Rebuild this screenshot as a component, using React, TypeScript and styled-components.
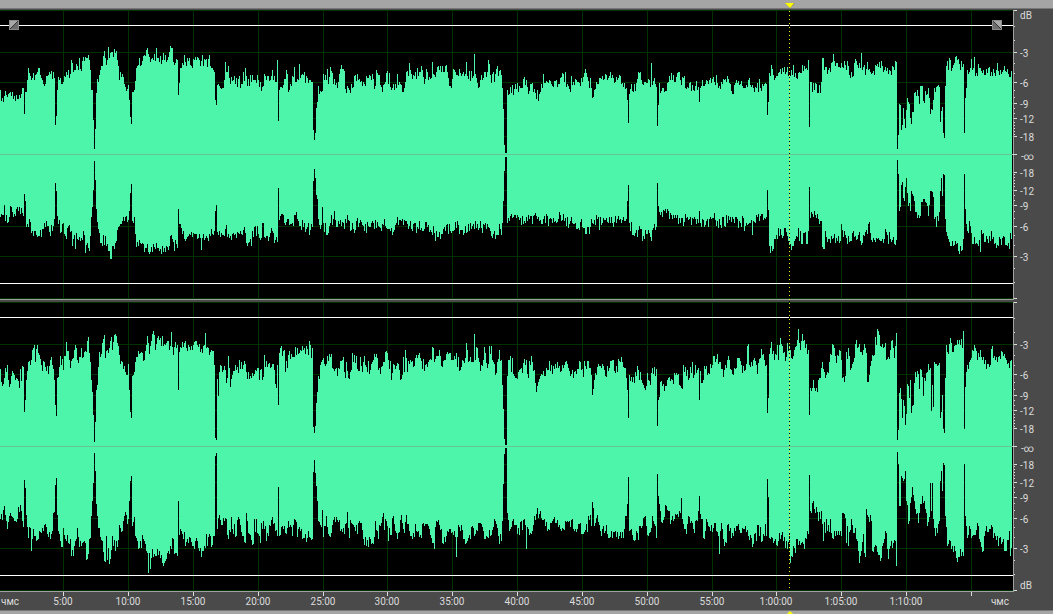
import React from 'react';
import styled, { createGlobalStyle } from 'styled-components';

const GlobalStyle = createGlobalStyle`
  * { box-sizing: border-box; }
  body { margin: 0; background: #a5a5a5; font-family: Roboto, "Liberation Sans", sans-serif; }
`;

/* Envelope breakpoints, "column,row" pairs, for each side of each channel. */
const LEFT_UPPER = `0,90 1,101 4,96 7,97 10,92 14,96 20,98 22,88 23,88 24,114 25,92 27,80 28,68 30,76 34,80 38,68 41,78 45,84 50,74 54,78 55,125 56,116 57,90 60,78 63,82 66,72 70,74 71,60 73,72 76,64 80,69 84,61 88,55 90,70 92,90 93,120 94,149 95,129 96,93 98,82 101,66 104,51 105,58 107,60 111,52 113,57 114,49 117,60 119,80 122,74 125,87 128,85 129,100 130,117 131,124 132,92 134,90 136,68 139,58 141,65 145,56 147,48 150,62 154,54 158,58 162,60 168,57 171,48 173,62 177,60 178,95 179,83 181,68 184,55 190,65 194,60 200,66 205,60 210,66 213,70 214,72 215,100 216,105 217,85 220,88 224,80 225,62 227,72 230,84 236,78 242,84 245,68 247,86 252,75 256,83 263,86 264,74 270,80 276,82 277,60 278,121 279,90 283,85 286,70 288,92 290,84 292,76 296,82 298,80 299,64 300,78 303,75 308,83 311,82 312,82 313,130 314,140 315,133 316,108 317,102 318,86 322,91 323,74 326,80 327,69 328,84 330,67 333,84 338,82 340,69 343,69 345,89 350,93 352,88 354,76 360,82 364,84 366,76 370,76 372,74 375,86 376,70 380,85 382,92 385,82 387,71 390,87 394,90 397,74 402,92 406,72 410,70 412,79 414,76 420,72 422,70 424,84 426,69 428,80 431,78 432,62 433,74 436,72 438,66 441,72 445,66 448,78 451,88 453,69 456,75 461,76 465,74 466,62 467,76 473,76 474,54 475,74 478,88 480,80 484,72 487,72 488,60 490,75 494,82 497,66 498,76 500,70 502,88 503,109 504,145 505,153 506,153 507,90 511,93 515,84 518,92 522,88 526,80 528,94 532,83 536,99 540,92 543,74 545,83 549,80 553,87 558,84 561,77 564,82 565,72 570,92 571,76 574,85 578,82 582,82 587,77 589,88 590,78 592,98 594,90 596,82 600,78 603,80 606,75 609,76 610,72 613,78 618,78 622,83 626,88 627,100 628,123 629,94 631,84 633,92 636,83 638,72 640,72 642,84 645,82 648,79 650,87 651,63 652,85 654,78 656,87 657,126 658,105 659,83 660,93 664,92 668,82 671,73 675,82 678,72 679,72 681,85 684,76 688,88 692,85 698,87 699,102 700,88 705,84 710,78 714,82 718,88 724,80 727,76 730,84 732,94 736,80 740,84 744,88 748,80 752,85 756,88 760,88 766,84 767,115 768,102 769,73 771,65 774,80 778,73 782,68 786,72 790,76 793,65 796,78 800,73 804,66 807,70 808,60 809,127 810,82 812,92 816,84 820,93 821,82 822,58 824,70 828,70 832,62 835,66 840,68 845,65 848,66 852,77 854,63 858,68 860,68 861,53 862,70 868,70 872,73 876,66 882,66 888,74 894,70 896,62 897,149 898,135 899,104 900,105 901,130 903,108 905,128 907,98 909,104 911,124 914,93 917,90 919,104 920,86 924,103 928,88 930,114 932,110 934,88 937,86 939,87 940,122 942,107 943,133 944,138 945,86 946,66 948,70 950,60 952,68 955,57 957,60 960,70 963,64 964,133 965,98 967,70 970,68 973,68 974,57 975,76 978,64 982,73 988,68 990,76 996,70 1002,72 1004,66 1008,74 1012,72`;
const LEFT_LOWER = `0,216 4,204 7,222 10,205 14,213 19,206 22,212 23,215 24,193 25,200 26,226 30,221 33,235 38,235 42,228 46,220 50,235 54,218 55,182 56,190 57,215 60,232 63,222 66,238 69,224 72,245 76,232 80,240 84,234 88,247 89,250 90,235 91,216 92,206 93,189 94,160 95,179 96,208 98,228 102,245 105,235 109,250 111,258 112,245 114,248 116,240 119,225 123,216 127,221 128,219 129,210 130,192 131,183 132,220 134,216 135,233 138,245 143,243 148,251 153,243 160,248 166,245 172,238 177,247 178,208 179,223 182,233 186,238 192,236 200,237 201,249 202,237 210,235 214,230 215,210 216,204 217,231 220,236 225,228 230,235 236,237 240,230 245,232 247,245 250,238 251,245 255,225 259,237 263,222 264,236 268,240 272,230 277,241 278,187 279,219 281,213 284,222 288,218 293,225 295,214 300,225 304,222 305,231 308,222 312,226 313,180 314,168 315,177 316,194 318,218 321,224 322,206 323,222 327,234 330,222 334,210 336,226 340,219 344,228 347,214 350,230 356,220 362,224 366,232 372,220 380,227 384,218 390,230 396,222 402,218 408,228 414,222 420,229 428,224 434,232 441,233 446,224 452,230 458,224 464,232 470,222 478,229 485,222 490,230 497,234 502,222 503,200 504,170 505,156 506,156 507,222 515,214 525,222 535,212 545,222 560,214 575,222 590,226 598,216 610,222 620,218 626,218 627,200 628,184 629,222 632,234 640,228 650,236 656,226 657,182 658,205 660,214 670,212 680,222 690,216 698,222 699,210 700,222 710,216 720,224 730,216 740,222 751,219 752,234 753,220 760,215 766,216 767,189 768,209 769,245 772,250 775,238 778,227 782,237 785,227 788,240 793,245 796,235 798,227 801,243 804,232 807,243 808,230 809,186 810,217 814,210 818,218 821,220 822,246 824,248 825,230 828,238 834,233 840,240 841,223 845,234 850,240 853,230 858,234 861,244 864,235 868,223 870,232 875,241 880,240 884,238 885,228 890,238 896,239 897,159 898,173 899,210 900,206 901,184 902,181 904,200 906,177 908,205 910,210 911,190 913,195 915,211 920,215 921,201 924,198 928,215 930,190 932,191 934,218 938,220 940,190 941,177 942,195 943,173 944,174 945,218 947,235 951,245 955,240 960,245 962,249 963,238 964,173 965,208 967,230 969,220 971,232 978,245 982,233 990,240 991,230 998,245 1003,235 1006,244 1012,231`;
const RIGHT_UPPER = `0,369 1,382 4,378 7,365 8,380 10,384 13,373 16,378 19,388 22,366 23,367 24,412 25,400 26,380 28,362 31,360 33,348 35,362 37,345 39,355 42,371 44,362 48,374 50,360 52,365 54,380 55,405 56,416 57,378 60,356 63,370 66,342 68,351 70,368 74,350 75,345 77,360 79,357 82,358 86,352 88,337 90,362 91,380 92,392 93,415 94,442 95,422 96,390 98,367 101,354 104,335 105,358 107,350 109,348 111,337 112,350 114,335 117,343 120,364 122,362 126,375 128,364 129,390 130,412 131,418 132,376 134,372 136,357 139,354 144,360 147,336 149,354 151,341 154,335 155,350 158,336 161,346 165,345 170,346 171,332 173,355 175,342 177,345 178,390 179,352 181,348 188,345 192,350 195,341 200,352 204,345 205,333 206,348 210,352 213,351 214,365 215,438 216,440 217,379 218,396 219,372 220,365 225,370 226,383 228,356 230,387 232,375 235,365 238,373 241,362 246,372 250,376 255,370 258,368 262,380 266,361 270,368 274,370 276,388 277,365 278,405 279,353 284,350 285,372 288,355 292,357 296,355 300,350 304,348 308,355 309,341 311,358 312,348 313,427 314,433 315,426 316,403 317,392 318,376 322,360 325,366 329,354 332,368 337,376 341,361 343,357 345,378 346,362 348,378 351,370 354,355 358,371 364,356 369,374 372,362 376,354 380,374 384,362 387,353 391,380 394,365 399,370 401,379 403,357 404,372 405,350 407,372 410,360 414,366 416,355 420,358 424,371 428,362 431,360 432,347 434,362 439,350 441,366 444,360 448,354 452,360 456,353 459,371 462,360 465,358 466,343 468,362 473,362 474,334 475,360 477,348 480,371 483,360 484,347 487,368 489,346 492,360 496,373 499,350 501,360 502,385 503,409 504,439 505,445 506,445 507,376 508,360 510,356 514,376 518,372 522,373 526,360 528,378 531,356 534,370 536,392 538,382 544,376 548,370 549,361 552,374 557,362 561,371 566,361 570,376 575,371 579,361 583,377 587,361 590,368 591,375 592,395 594,380 597,367 602,364 605,376 610,361 613,360 615,373 618,359 622,362 625,368 626,378 627,390 628,418 629,375 632,382 635,372 638,370 641,380 644,388 648,380 650,385 652,368 655,376 656,369 657,426 658,400 660,382 664,391 668,378 672,380 678,374 681,388 685,367 688,380 690,367 694,375 698,368 699,400 700,371 702,383 704,366 708,373 710,364 716,359 720,362 723,377 727,360 732,374 738,358 742,373 746,364 747,346 749,365 753,360 757,374 760,358 763,354 766,365 767,413 768,398 769,354 771,342 774,360 777,345 778,360 780,338 783,353 785,361 787,343 790,350 793,356 796,346 798,329 800,350 802,334 805,348 808,350 809,415 810,388 812,388 813,380 815,391 818,380 820,378 822,362 824,372 825,378 829,362 833,345 836,363 840,351 842,378 845,376 848,348 850,370 854,358 856,340 860,352 862,355 865,348 867,382 869,375 872,355 874,355 875,337 876,345 878,331 880,346 885,343 886,360 890,350 892,340 894,358 896,333 897,440 898,430 899,393 900,388 902,418 903,400 905,425 907,384 909,398 910,380 911,413 913,405 914,383 917,371 919,389 921,370 923,396 926,373 930,368 931,411 932,385 933,407 935,364 938,365 939,363 940,418 941,412 942,395 943,429 944,433 945,378 946,345 948,354 950,338 953,352 956,345 959,340 962,348 963,331 964,429 965,387 967,365 970,360 972,350 975,348 977,360 980,350 984,364 990,365 991,349 995,360 998,357 1002,352 1006,360 1009,368 1012,360`;
const RIGHT_LOWER = `0,518 4,505 7,528 10,512 14,520 17,518 20,504 22,520 23,526 24,479 25,487 26,514 28,537 30,527 31,550 33,528 36,540 40,531 46,526 50,538 53,512 54,511 55,484 56,477 57,514 60,540 62,546 63,527 66,540 70,538 71,555 75,540 77,527 79,546 84,540 87,558 89,538 91,515 92,500 93,482 94,452 95,470 96,503 98,527 102,540 104,560 106,535 109,563 112,535 115,550 119,524 122,530 125,511 127,523 128,518 129,500 130,480 131,475 132,525 134,516 135,535 138,548 143,538 146,550 147,552 148,572 149,552 150,568 152,548 156,555 159,550 162,562 166,558 170,545 173,538 177,555 178,500 179,534 181,530 185,545 189,536 193,545 197,540 201,556 204,545 208,536 214,535 215,455 216,452 217,528 219,514 222,524 226,518 228,538 231,516 235,536 238,516 242,535 245,542 246,512 248,532 252,544 256,518 260,542 263,520 266,540 270,525 272,516 275,530 277,535 278,486 279,535 282,525 285,532 288,520 292,535 295,519 300,530 304,537 308,530 312,538 313,471 314,459 315,472 316,485 317,500 318,520 321,526 322,509 323,536 326,515 328,533 332,524 336,516 340,530 344,533 347,511 349,537 350,519 355,530 360,522 363,538 367,539 373,543 375,520 378,538 382,516 386,520 388,540 393,515 397,538 401,514 404,532 406,514 409,530 412,538 415,523 419,536 423,522 428,525 431,537 433,542 436,520 439,524 443,543 447,530 450,528 455,536 456,556 457,536 458,524 463,538 467,540 472,525 475,533 479,522 483,530 488,537 494,518 498,535 501,540 502,520 503,483 504,453 505,447 506,447 507,512 509,530 512,520 517,533 521,520 525,524 526,548 527,526 532,530 536,513 540,510 545,525 548,528 552,520 556,522 563,528 567,520 572,518 574,530 578,523 583,533 588,515 591,525 592,501 594,525 597,514 601,535 606,524 610,536 615,530 619,535 624,528 626,515 627,503 628,476 629,530 634,540 640,525 645,515 648,535 652,515 655,525 656,537 657,473 658,495 660,510 662,522 665,504 668,510 672,515 678,516 680,512 681,497 682,518 684,528 688,515 692,522 694,532 698,510 699,495 700,513 702,518 704,538 706,518 710,530 714,522 718,535 719,553 720,530 721,522 724,545 727,524 732,532 736,525 741,532 745,525 748,535 752,546 757,524 762,540 765,523 766,535 767,478 768,496 769,537 773,542 778,540 782,531 787,548 789,533 790,562 791,555 793,545 799,540 804,548 808,533 809,474 810,510 812,502 814,508 816,506 818,520 821,510 823,540 826,518 831,532 836,530 841,535 842,512 845,517 848,545 851,518 856,538 860,555 863,533 865,556 866,508 868,516 871,520 872,550 876,545 880,560 882,545 886,532 888,558 890,545 895,540 896,565 897,451 898,463 899,505 900,505 901,475 903,480 905,470 906,500 909,520 910,502 912,486 914,500 918,522 922,495 924,500 927,525 930,482 931,510 932,482 933,518 935,535 939,520 940,480 941,470 942,490 943,462 944,464 945,515 947,545 950,540 955,550 957,561 960,548 963,555 964,463 965,515 967,537 969,525 972,535 978,525 982,551 985,530 990,528 995,535 998,545 1003,538 1006,550 1009,530 1010,555 1012,535`;

const COLUMNS = 1013;
const HALF = 144;
const TRACK_HEIGHT = 289;
const GREEN = '#4cf5a9';

function makeRandom(seed: number) {
  let state = seed;
  return () => {
    state = (state * 1664525 + 1013904223) >>> 0;
    return state / 4294967296;
  };
}

/* Expands breakpoints into one peak per column, with the fine grain of audio. */
function expand(points: string, zero: number, seed: number): number[] {
  const pairs = points.split(' ').map((p) => p.split(',').map(Number));
  const random = makeRandom(seed);
  const peaks: number[] = [];
  let k = 0;
  for (let x = 0; x < COLUMNS - 1; x++) {
    while (k < pairs.length - 2 && pairs[k + 1][0] <= x) k++;
    const [x0, y0] = pairs[k];
    const [x1, y1] = pairs[k + 1];
    const linear = (x - x0) / (x1 - x0);
    const blend = x === x0 ? 0 : linear * 0.4 + random() * 0.6;
    const level = Math.abs(y0 + (y1 - y0) * blend - zero);
    const burst = random() > 0.9 ? 5 : 0;
    const grain = x === x0 ? 0 : (random() - 0.5) * 11 + burst;
    const swing = Math.min(1, Math.max(0, (level - 35) / 20));
    peaks.push(Math.max(0, Math.round(level + grain * swing)));
  }
  return peaks;
}

function wavePath(upper: number[], lower: number[]): string {
  let d = `M0 ${HALF}`;
  upper.forEach((h, x) => {
    d += `V${HALF - h}H${x + 1}`;
  });
  for (let x = lower.length - 1; x >= 0; x--) d += `V${HALF + 1 + lower[x]}H${x}`;
  return d + 'Z';
}

const CHANNELS = [
  { id: 'Left channel', path: wavePath(expand(LEFT_UPPER, 154, 7), expand(LEFT_LOWER, 154, 19)) },
  { id: 'Right channel', path: wavePath(expand(RIGHT_UPPER, 446, 31), expand(RIGHT_LOWER, 446, 43)) },
];

const TIME_MARKS = [
  { x: 63, label: '5:00' }, { x: 128, label: '10:00' }, { x: 193, label: '15:00' },
  { x: 258, label: '20:00' }, { x: 323, label: '25:00' }, { x: 387, label: '30:00' },
  { x: 452, label: '35:00' }, { x: 517, label: '40:00' }, { x: 582, label: '45:00' },
  { x: 647, label: '50:00' }, { x: 712, label: '55:00' }, { x: 776, label: '1:00:00' },
  { x: 841, label: '1:05:00' }, { x: 906, label: '1:10:00' }, { x: 971, label: '' },
];

const LEVELS = [3, 6, 9, 12, 18];
const offsetOf = (db: number) => Math.round(HALF * Math.pow(10, -db / 20));
const percent = (x: number) => `${(x / COLUMNS) * 100}%`;

const Editor = styled.main`
  width: 100%;
  overflow: hidden;
  background: #4a4a4a;
`;

const Strip = styled.div<{ $edge: 'top' | 'bottom' }>`
  position: relative;
  height: ${(p) => (p.$edge === 'top' ? 9 : 4)}px;
  background: #a5a5a5;
  border-${(p) => (p.$edge === 'top' ? 'bottom' : 'top')}: 1px solid #777;
`;

const Handle = styled.svg<{ $edge: 'top' | 'bottom' }>`
  position: absolute;
  ${(p) => (p.$edge === 'top' ? 'top: 3px' : 'top: 0')};
  width: 10px;
  height: 5px;
  margin-left: -5px;
  display: block;
`;

const Tracks = styled.div`
  position: relative;
  display: flex;
  flex-direction: column;
  gap: 2px;
  padding-top: 1px;
`;

const Channel = styled.section`
  display: flex;
`;

const Canvas = styled.div`
  position: relative;
  flex: 1;
  min-width: 0;
  background: #000;
  border-bottom: 1px solid #a0a0a0;
`;

const Wave = styled.svg`
  display: block;
  width: 100%;
  height: ${TRACK_HEIGHT}px;
`;

const Axis = styled.svg`
  display: block;
  flex: none;
  width: 40px;
  height: 290px;
  overflow: visible;
`;

const AxisText = styled.text`
  font-size: 10px;
  fill: #dcdcdc;
`;

const FadeButton = styled.button<{ $side: 'left' | 'right' }>`
  position: absolute;
  top: 10px;
  ${(p) => (p.$side === 'left' ? 'left: 9px' : 'right: 11px')};
  width: 10px;
  height: 10px;
  padding: 0;
  border: 0;
  background: #8a8a8a;
  svg { display: block; width: 10px; height: 10px; }
`;

const Overlay = styled.div`
  position: absolute;
  inset: 0 40px 0 0;
  pointer-events: none;
`;

const Playhead = styled.div`
  position: absolute;
  top: 2px;
  bottom: 1px;
  width: 1px;
  background: repeating-linear-gradient(#ffff00 0 1px, transparent 1px 2px, #000 2px 3px, transparent 3px 4px);
`;

const Ruler = styled.div`
  display: flex;
  height: 18px;
  padding-right: 40px;
`;

const RulerScale = styled.svg`
  flex: 1;
  min-width: 0;
  height: 18px;
  overflow: visible;
`;

const HandleRow = styled.div`
  position: relative;
  margin-right: 40px;
  height: 100%;
`;

function DbAxis({ unitAt }: { unitAt: 'top' | 'bottom' }) {
  const ticks = Array.from({ length: 19 }, (_, db) => db);
  return (
    <Axis shapeRendering="crispEdges">
      <rect x="0" y="0" width="1" height="290" fill="#a0a0a0" />
      {ticks.map((db) => {
        const length = db === 0 || LEVELS.includes(db) ? 3 : 1;
        return (
          <g key={db} fill="#dcdcdc">
            <rect x="1" y={HALF - offsetOf(db)} width={length} height="1" />
            <rect x="1" y={HALF + offsetOf(db)} width={length} height="1" />
          </g>
        );
      })}
      <rect x="0" y={HALF} width="4" height="1" fill="#dcdcdc" />
      {LEVELS.map((db) => (
        <g key={db}>
          <AxisText x="7" y={HALF - offsetOf(db) + 5}>{`-${db}`}</AxisText>
          <AxisText x="7" y={HALF + offsetOf(db) + 5}>{`-${db}`}</AxisText>
        </g>
      ))}
      <AxisText x="8" y={HALF + 6}>-∞</AxisText>
      <AxisText x="7" y={unitAt === 'top' ? 9 : 287}>dB</AxisText>
    </Axis>
  );
}

function ChannelView({ id, path, first }: { id: string; path: string; first: boolean }) {
  return (
    <Channel aria-label={id}>
      <Canvas>
        <Wave viewBox={`0 0 ${COLUMNS} ${TRACK_HEIGHT}`} preserveAspectRatio="none" shapeRendering="crispEdges">
          <g fill="#003200">
            {TIME_MARKS.map((m) => (
              <rect key={m.x} x={m.x} y="0" width="1" height={TRACK_HEIGHT} />
            ))}
            {[0, ...LEVELS].map((db) => (
              <g key={db}>
                <rect x="0" y={HALF - offsetOf(db)} width={COLUMNS} height="1" />
                <rect x="0" y={HALF + offsetOf(db)} width={COLUMNS} height="1" />
              </g>
            ))}
          </g>
          <path d={path} fill={GREEN} />
          <rect x="0" y={HALF} width={COLUMNS} height="1" fill="#68c495" />
          <rect x="0" y="15" width={COLUMNS} height="1" fill="#fff" />
          <rect x="0" y="273" width={COLUMNS} height="1" fill="#fff" />
        </Wave>
        {first && (
          <>
            <FadeButton $side="left" aria-label="Fade in">
              <svg viewBox="0 0 10 10">
                <path d="M0 0H10L0 10Z" fill="#a8a8a8" />
                <path d="M10 0V10H0Z" fill="#6c6c6c" />
                <path d="M1 9L9 1" stroke="#333" />
                <path d="M0.5 0.5H9.5V9.5H0.5Z" fill="none" stroke="#8a8a8a" />
              </svg>
            </FadeButton>
            <FadeButton $side="right" aria-label="Fade out">
              <svg viewBox="0 0 10 10">
                <path d="M0 0H10V10Z" fill="#a8a8a8" />
                <path d="M0 0V10H10Z" fill="#6c6c6c" />
                <path d="M1 1L9 9" stroke="#333" />
                <path d="M0.5 0.5H9.5V9.5H0.5Z" fill="none" stroke="#8a8a8a" />
              </svg>
            </FadeButton>
          </>
        )}
      </Canvas>
      <DbAxis unitAt={first ? 'top' : 'bottom'} />
    </Channel>
  );
}

export default function App() {
  const playhead = 789;
  return (
    <>
      <GlobalStyle />
      <Editor>
        <Strip $edge="top">
          <HandleRow>
            <Handle $edge="top" viewBox="0 0 10 5" style={{ left: percent(playhead + 0.5) }}>
              <path d="M0 0H10L5 5Z" fill="#8a8a20" />
              <path d="M0 0H9L5 5Z" fill="#ffff00" />
            </Handle>
          </HandleRow>
        </Strip>
        <Tracks>
          {CHANNELS.map((c, i) => (
            <ChannelView key={c.id} id={c.id} path={c.path} first={i === 0} />
          ))}
          <Overlay>
            <Playhead style={{ left: percent(playhead) }} />
          </Overlay>
        </Tracks>
        <Ruler>
          <RulerScale shapeRendering="crispEdges">
            {TIME_MARKS.map((m) => (
              <g key={m.x}>
                <rect x={percent(m.x)} y="0" width="1" height="4" fill="#dcdcdc" />
                <AxisText x={percent(m.x)} y="13" textAnchor="middle">{m.label}</AxisText>
              </g>
            ))}
            <AxisText x="1" y="13">чмс</AxisText>
            <AxisText x={percent(1009)} y="13" textAnchor="end">чмс</AxisText>
          </RulerScale>
        </Ruler>
        <Strip $edge="bottom">
          <HandleRow>
            <Handle $edge="bottom" viewBox="0 0 10 5" style={{ left: percent(playhead + 0.5) }}>
              <path d="M5 0L9 4V5H1V4Z" fill="#ffff00" />
            </Handle>
          </HandleRow>
        </Strip>
      </Editor>
    </>
  );
}
